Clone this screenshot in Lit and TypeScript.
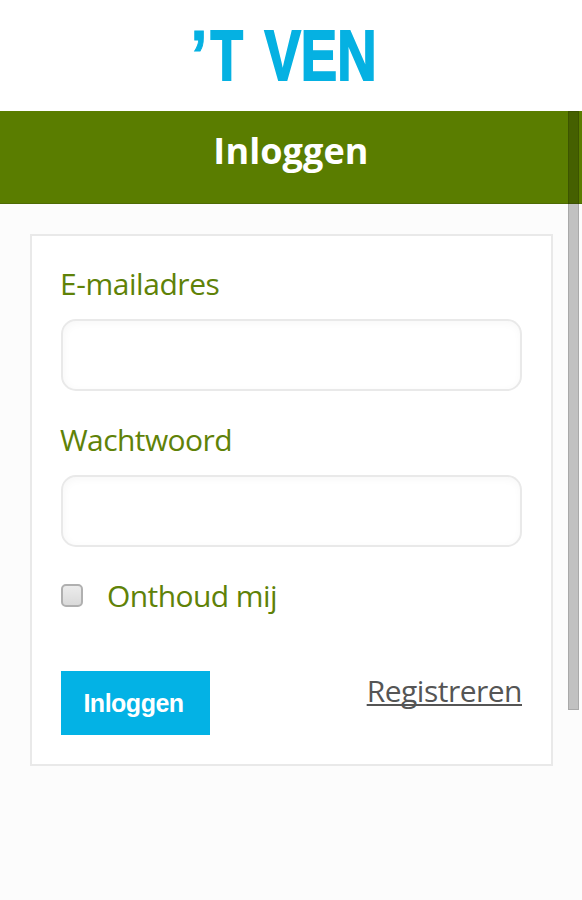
import { LitElement, html, css } from "lit";
import { customElement } from "lit/decorators.js";

@customElement("app-root")
class AppRoot extends LitElement {
  static styles = css`
    :host {
      display: block;
      position: relative;
      height: 900px;
      overflow: hidden;
      background: #fcfcfc;
      font-family: "Open Sans", sans-serif;
      font-size: 30px;
      line-height: 40px;
    }
    * { box-sizing: border-box; }
    .brand {
      display: flex;
      justify-content: center;
      height: 111px;
      background: #fff;
    }
    .logo { width: 582px; height: 111px; }
    .logo text {
      font: bold 71px "Liberation Sans", sans-serif;
      fill: #05b1e2;
      stroke: #05b1e2;
      stroke-width: 2px;
    }
    .logo .quote { stroke-width: 1px; }
    .title {
      margin: 0;
      height: 93px;
      padding-top: 16px;
      background: #5a7d00;
      border-bottom: 1px solid #4e6b05;
      color: #fff;
      font-size: 36px;
      line-height: 48px;
      font-weight: 700;
      letter-spacing: 0.1px;
      text-align: center;
    }
    .card {
      margin: 30px 29px 0 30px;
      height: 532px;
      padding: 28px 29px;
      border: 2px solid #e9e9e9;
      background: #fff;
    }
    label { display: block; margin-left: -1px; color: #5f8208; letter-spacing: -0.58px; }
    .email { letter-spacing: -0.45px; }
    .field {
      display: block;
      width: 100%;
      height: 72px;
      margin: 15px 0 29px;
      padding: 0 20px;
      border: 2px solid #e9e9e9;
      border-radius: 15px;
      background: #fff;
      box-shadow: inset 1px 2px 8px rgba(0, 0, 0, 0.035);
      font: inherit;
      outline: none;
    }
    .remember { display: flex; align-items: center; }
    .check {
      appearance: none;
      width: 22px;
      height: 23px;
      margin: 0 25px 1px 0;
      border: 2px solid #b0b0b0;
      border-radius: 5px;
      background: linear-gradient(#ececec, #dadada);
    }
    .actions {
      display: flex;
      justify-content: space-between;
      align-items: flex-start;
      margin-top: 55px;
    }
    .submit {
      width: 149px;
      height: 64px;
      padding: 0 4px 0 0;
      border: 0;
      background: #03b2e5;
      color: #fff;
      font: bold 25px/64px "Liberation Sans", sans-serif;
      letter-spacing: -0.5px;
    }
    .register {
      color: #555;
      letter-spacing: -0.5px;
      text-decoration: underline;
      text-decoration-thickness: 2px;
      text-underline-offset: 2px;
      text-decoration-skip-ink: none;
    }
    .scrollbar {
      position: absolute;
      top: 111px;
      right: 3px;
      width: 11px;
      height: 599px;
      border: 1px solid rgba(0, 0, 0, 0.12);
      background: rgba(0, 0, 0, 0.23);
    }
  `;

  render() {
    return html`
      <header>
        <div class="brand">
          <svg class="logo" viewBox="0 0 582 111">
            <text class="quote" x="190.5" y="79.5" textLength="17" lengthAdjust="spacingAndGlyphs">’</text>
            <text x="210.5" y="79.5" textLength="32.5" lengthAdjust="spacingAndGlyphs">T</text>
            <text x="264.5" y="79.5" textLength="112" lengthAdjust="spacingAndGlyphs">VEN</text>
          </svg>
        </div>
        <h1 class="title">Inloggen</h1>
      </header>
      <form class="card" @submit=${(e: Event) => e.preventDefault()}>
        <label class="email" for="email">E-mailadres</label>
        <input class="field" id="email" type="email" />
        <label for="password">Wachtwoord</label>
        <input class="field" id="password" type="password" />
        <div class="remember">
          <input class="check" id="remember" type="checkbox" />
          <label for="remember">Onthoud mij</label>
        </div>
        <div class="actions">
          <button class="submit">Inloggen</button>
          <a class="register" href="#">Registreren</a>
        </div>
      </form>
      <div class="scrollbar"></div>
    `;
  }
}
